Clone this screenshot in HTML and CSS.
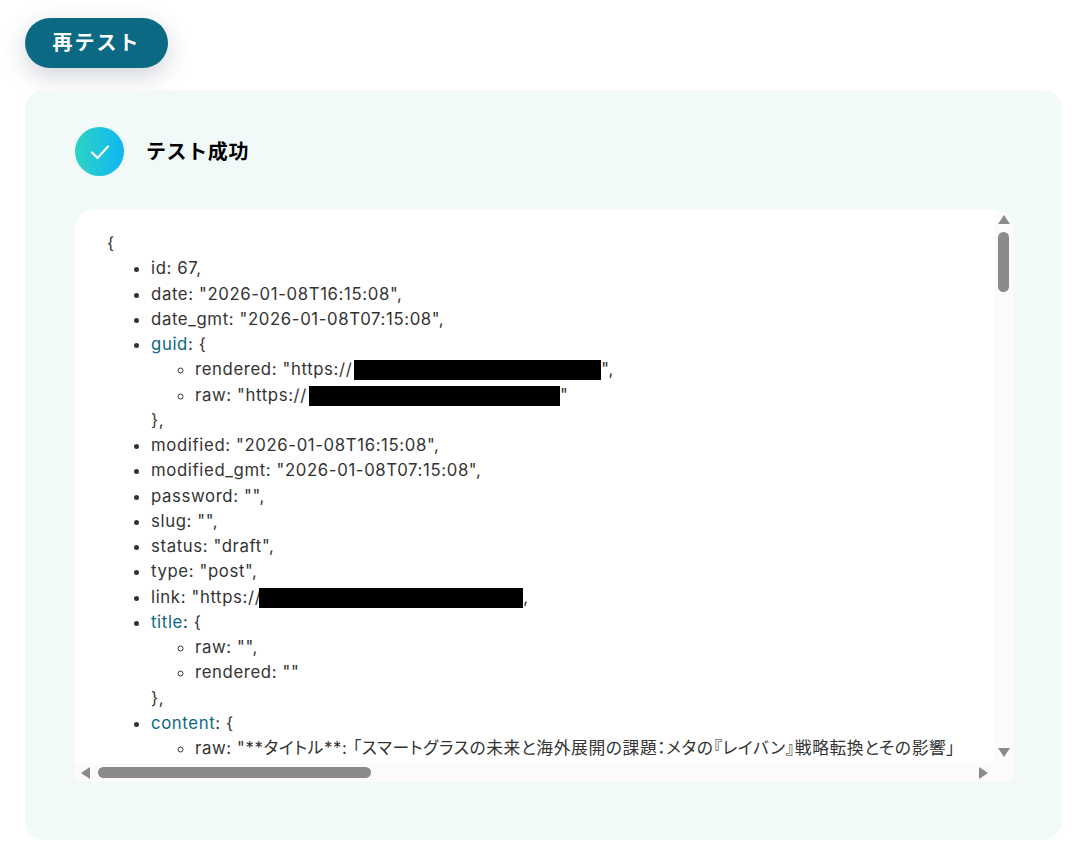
FILE: index.html
```html
<!DOCTYPE html>
<html lang="ja">
<head>
<meta charset="utf-8">
<title>テスト成功</title>
<link rel="stylesheet" href="styles.css">
</head>
<body>
<main class="page">
  <button class="retest" type="button">再テスト</button>
  <section class="result">
    <header class="result-head">
      <span class="check">
        <svg viewBox="0 0 20 16" width="20" height="16" fill="none" stroke="#fff" stroke-width="2.200" stroke-linecap="round" stroke-linejoin="round"><path d="M2 8.500l5.500 5.500L18 2.500"/></svg>
      </span>
      <h1 class="result-title">テスト成功</h1>
    </header>
    <div class="viewer">
      <div class="viewport">
        <div class="tree">
          <div>{</div>
          <ul>
            <li>id: 67,</li>
            <li>date: "2026-01-08T16:15:08",</li>
            <li>date_gmt: "2026-01-08T07:15:08",</li>
            <li><a class="key">guid</a>: {
              <ul>
                <li>rendered: "https://<span class="redact r1"></span>",</li>
                <li>raw: "https://<span class="redact r2"></span>"</li>
              </ul>
              },
            </li>
            <li>modified: "2026-01-08T16:15:08",</li>
            <li>modified_gmt: "2026-01-08T07:15:08",</li>
            <li>password: "",</li>
            <li>slug: "",</li>
            <li>status: "draft",</li>
            <li>type: "post",</li>
            <li>link: "https://<span class="redact r3"></span>,</li>
            <li><a class="key">title</a>: {
              <ul>
                <li>raw: "",</li>
                <li>rendered: ""</li>
              </ul>
              },
            </li>
            <li><a class="key">content</a>: {
              <ul>
                <li>raw: "**タイトル**: 「スマートグラスの未来と海外展開の課題：メタの『レイバン』戦略転換とその影響」</li>
              </ul>
            </li>
          </ul>
        </div>
      </div>
      <div class="vbar">
        <span class="arrow up"></span>
        <span class="vthumb"></span>
        <span class="arrow down"></span>
      </div>
      <div class="hbar">
        <span class="arrow left"></span>
        <span class="hthumb"></span>
        <span class="arrow right"></span>
      </div>
      <div class="corner"></div>
    </div>
  </section>
</main>
</body>
</html>
```
FILE: styles.css
```css
* { box-sizing: border-box; }
html, body { margin: 0; background: #fff; }
body {
  font-family: Inter, "Noto Sans CJK JP", sans-serif;
  color: #333;
  overflow: hidden;
}
.page {
  width: 1085px;
  height: 858px;
  padding: 18px 23px 0 25px;
  display: flex;
  flex-direction: column;
  align-items: flex-start;
  gap: 22px;
}
.retest {
  width: 143px;
  height: 50px;
  border: 0;
  border-radius: 25px;
  padding: 0 0 1px;
  background: #0b6983;
  color: #fff;
  font: 700 20px/1 Inter, "Noto Sans CJK JP", sans-serif;
  letter-spacing: 2px;
  box-shadow: 0 8px 24px rgba(40, 60, 80, 0.22);
}
.result {
  width: 1037px;
  height: 750px;
  background: #f2faf9;
  border-radius: 20px;
  padding: 37px 49px 0 50px;
}
.result-head {
  display: flex;
  align-items: center;
  gap: 22px;
  height: 49px;
  margin-bottom: 33px;
}
.check {
  width: 49px;
  height: 49px;
  border-radius: 50%;
  background: linear-gradient(90deg, #2dd4c4, #0fb6f2);
  display: flex;
  align-items: center;
  justify-content: center;
}
.result-title {
  margin: 0 0 2px;
  font-size: 20px;
  font-weight: 700;
  color: #000;
  letter-spacing: 0.6px;
}
.viewer {
  width: 938px;
  height: 573px;
  background: #fff;
  border-radius: 20px 20px 0 0;
  overflow: hidden;
  display: grid;
  grid-template-columns: 920px 18px;
  grid-template-rows: 554px 19px;
}
.viewport {
  overflow: hidden;
  padding: 22px 0 0 32px;
}
.tree {
  font-size: 16.75px;
  line-height: 25.25px;
  letter-spacing: 0.62px;
  font-feature-settings: "palt";
  white-space: nowrap;
}
.tree ul {
  margin: 0;
  padding-left: 44px;
}
.key { color: #0b6983; }
.redact {
  display: inline-block;
  height: 20px;
  background: #000;
  vertical-align: -5px;
}
.r1 { width: 247px; margin-left: 2px; }
.r2 { width: 251px; margin-left: 2px; }
.r3 { width: 264px; margin-left: -2px; }
.vbar, .hbar, .corner { background: #fbfbfb; position: relative; }
.vbar {
  display: flex;
  flex-direction: column;
  align-items: center;
  padding: 6px 1px 6px 0;
}
.vthumb {
  width: 11px;
  height: 60px;
  margin-top: 8px;
  border-radius: 6px;
  background: #8a8a8a;
}
.hbar {
  display: flex;
  align-items: center;
  padding: 0 7px 0 6px;
}
.hthumb {
  width: 273px;
  height: 11px;
  margin-left: 8px;
  border-radius: 6px;
  background: #8a8a8a;
}
.arrow { width: 0; height: 0; border-style: solid; border-color: transparent; }
.up { border-width: 0 6.5px 9px; border-bottom-color: #8a8a8a; }
.down { border-width: 9px 6.5px 0; border-top-color: #8a8a8a; margin-top: auto; }
.left { border-width: 6px 9px 6px 0; border-right-color: #8a8a8a; }
.right { border-width: 6px 0 6px 9px; border-left-color: #8a8a8a; margin-left: auto; }
```
